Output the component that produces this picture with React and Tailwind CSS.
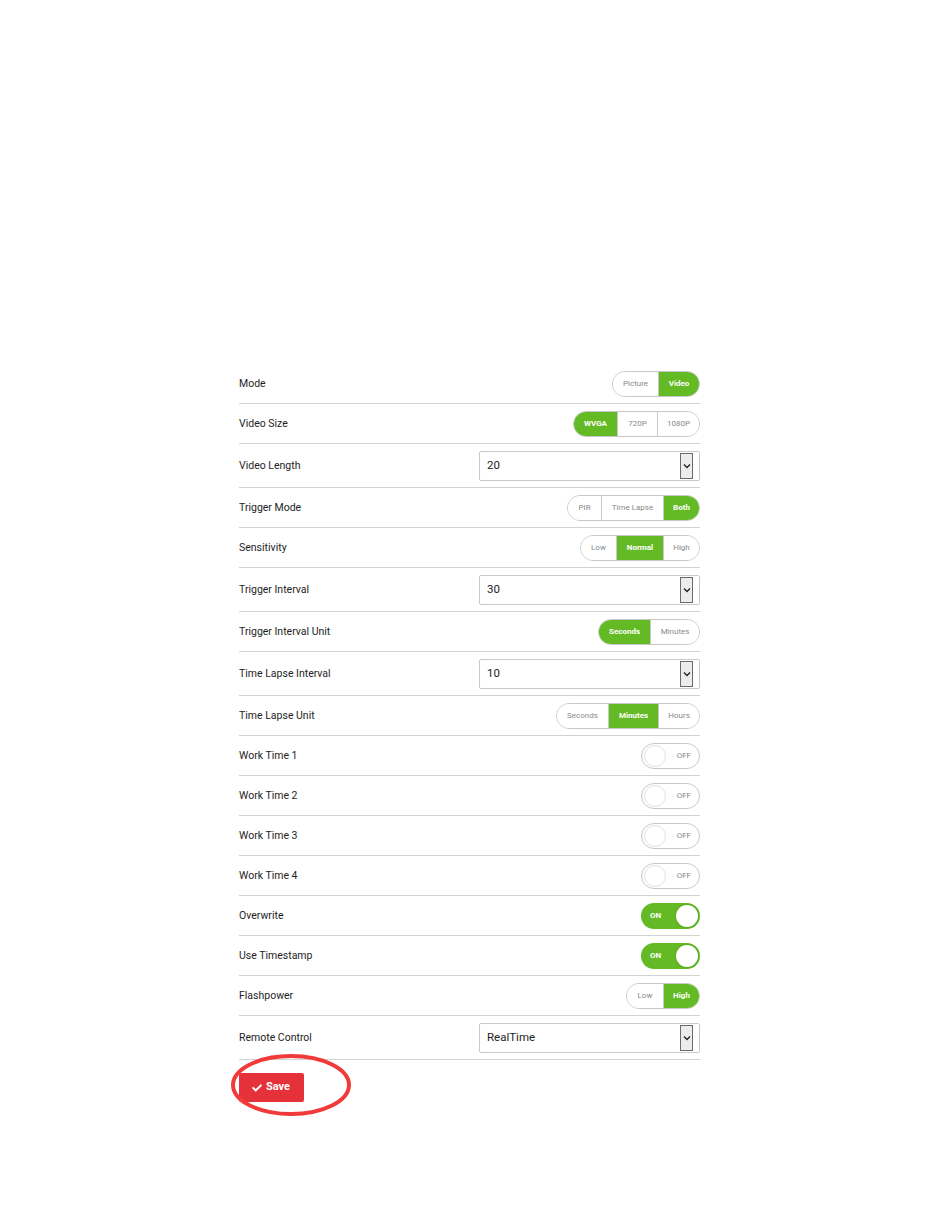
import React from "react";
import { FaCheck } from "react-icons/fa";

const GREEN = "bg-[#63ba24]";

const Segmented = ({ options, active }) => (
  <div className="inline-flex h-[26px] rounded-full border border-[#c8c8c8] overflow-hidden">
    {options.map(([label, w], i) => (
      <div
        key={label}
        style={{ width: w }}
        className={
          "flex items-center justify-center text-[8px] " +
          (i > 0 ? "border-l border-[#c8c8c8] " : "") +
          (i === active ? GREEN + " text-white font-bold" : "bg-white text-[#8a8a8a]")
        }
      >
        {label}
      </div>
    ))}
  </div>
);

const Toggle = ({ on }) =>
  on ? (
    <div className={"relative w-[59px] h-[26px] rounded-full flex items-center " + GREEN}>
      <span className="pl-[9px] text-[8px] font-bold text-white">ON</span>
      <div className="absolute right-[2px] top-[2px] w-[22px] h-[22px] rounded-full bg-white shadow-[0_0_2px_rgba(0,0,0,0.25)]" />
    </div>
  ) : (
    <div className="relative w-[59px] h-[26px] rounded-full border border-[#c8c8c8] bg-white flex items-center justify-end">
      <div className="absolute left-[2px] top-[1px] w-[22px] h-[22px] rounded-full border border-[#e2e2e2] bg-white" />
      <span className="pr-[8px] text-[8px] text-[#8a8a8a]">OFF</span>
    </div>
  );

const Select = ({ value }) => (
  <div className="w-[221px] h-[30px] border border-[#c9c9c9] rounded-[2px] bg-white flex items-center justify-between">
    <span className="pl-[7px] text-[11.5px] text-[#222]">{value}</span>
    <div className="w-[13px] h-[26px] mr-[6px] border border-[#6b6b6b] bg-[#ececec] flex items-center justify-center">
      <svg width="8" height="6" viewBox="0 0 8 6">
        <path d="M1 1.5 L4 4.5 L7 1.5" fill="none" stroke="#222" strokeWidth="1.4" />
      </svg>
    </div>
  </div>
);

const Row = ({ label, children }) => (
  <div className="flex items-center justify-between pt-[7px] pb-[6px] border-b border-[#d2d2d2]">
    <span className="text-[10.5px] text-[#1e1e1e]">{label}</span>
    {children}
  </div>
);

export default function App() {
  return (
    <div className="min-h-[1229px] bg-white font-['Roboto',sans-serif]">
      <div className="ml-[239px] w-[461px] pt-[364px]">
        <Row label="Mode">
          <Segmented options={[["Picture", 45], ["Video", 41]]} active={1} />
        </Row>
        <Row label="Video Size">
          <Segmented options={[["WVGA", 43], ["720P", 40], ["1080P", 42]]} active={0} />
        </Row>
        <Row label="Video Length">
          <Select value="20" />
        </Row>
        <Row label="Trigger Mode">
          <Segmented options={[["PIR", 33], ["Time Lapse", 62], ["Both", 36]]} active={2} />
        </Row>
        <Row label="Sensitivity">
          <Segmented options={[["Low", 35], ["Normal", 47], ["High", 36]]} active={1} />
        </Row>
        <Row label="Trigger Interval">
          <Select value="30" />
        </Row>
        <Row label="Trigger Interval Unit">
          <Segmented options={[["Seconds", 51], ["Minutes", 49]]} active={0} />
        </Row>
        <Row label="Time Lapse Interval">
          <Select value="10" />
        </Row>
        <Row label="Time Lapse Unit">
          <Segmented options={[["Seconds", 51], ["Minutes", 50], ["Hours", 41]]} active={1} />
        </Row>
        <Row label="Work Time 1">
          <Toggle on={false} />
        </Row>
        <Row label="Work Time 2">
          <Toggle on={false} />
        </Row>
        <Row label="Work Time 3">
          <Toggle on={false} />
        </Row>
        <Row label="Work Time 4">
          <Toggle on={false} />
        </Row>
        <Row label="Overwrite">
          <Toggle on />
        </Row>
        <Row label="Use Timestamp">
          <Toggle on />
        </Row>
        <Row label="Flashpower">
          <Segmented options={[["Low", 36], ["High", 36]]} active={1} />
        </Row>
        <Row label="Remote Control">
          <Select value="RealTime" />
        </Row>
        <div className="relative pt-[13px]">
          <button className="flex items-center gap-[4px] h-[29px] w-[65px] pl-[13px] rounded-[2px] bg-[#e5313a] text-white text-[11px] font-bold">
            <FaCheck className="w-[10px] h-[10px]" />
            Save
          </button>
          <svg
            className="absolute left-[-10px] top-[-8px] pointer-events-none"
            width="124"
            height="66"
            viewBox="0 0 124 66"
          >
            <ellipse cx="62" cy="33" rx="58" ry="29" fill="none" stroke="#f23a3a" strokeWidth="4" />
          </svg>
        </div>
      </div>
    </div>
  );
}
